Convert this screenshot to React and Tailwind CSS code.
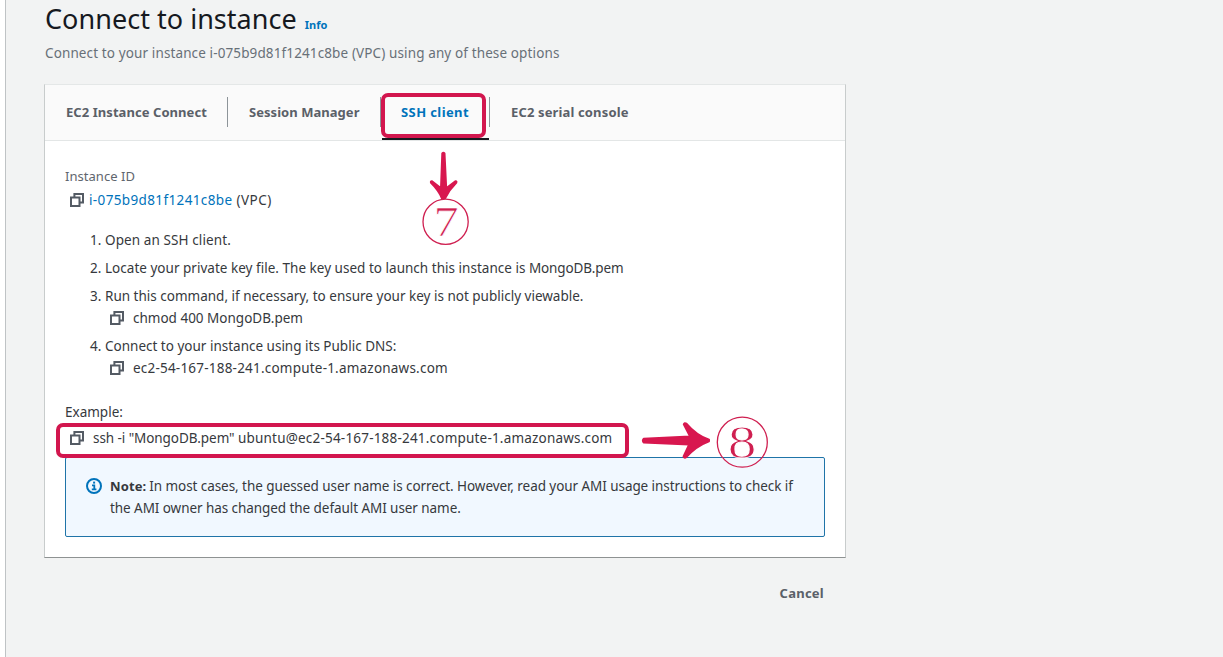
import React from "react";

function CopyIcon() {
  return (
    <svg width="14" height="14" viewBox="0 0 14 14" fill="none" stroke="#545b64" strokeWidth="2" className="shrink-0">
      <path d="M1 4.5h8.5V13H1z" />
      <path d="M4.4 4.2V1H13v8.6H9.9" />
    </svg>
  );
}

function InfoIcon() {
  return (
    <svg width="16" height="16" viewBox="0 0 16 16" fill="none" stroke="#0073bb" className="mt-[3px] shrink-0">
      <circle cx="8" cy="8" r="7" strokeWidth="2" />
      <path d="M6 7.3h2.3v4M5.8 11.4h4.6" strokeWidth="1.8" />
      <path d="M7.1 4.6h2" strokeWidth="2" />
    </svg>
  );
}

function Tab({ children, className }) {
  return <div className={"flex h-[30px] items-center pr-5 text-[13px] font-bold " + className}>{children}</div>;
}

function Marks() {
  return (
    <div className="pointer-events-none absolute inset-0">
      <div className="absolute top-[93px] left-[381px] h-[45px] w-[105px] rounded-[7px] border-4 border-[#d2164e]" />
      <div className="absolute top-[423px] left-[56px] h-[35px] w-[573px] rounded-[7px] border-4 border-[#d2164e]" />
      <div className="absolute top-[199px] left-[423px] w-[46px] scale-x-[1.2] text-center font-['Liberation_Serif',serif] text-[42px] leading-[46px] text-[#cf1f50] [-webkit-text-stroke:0.7px_white]">7</div>
      <div className="absolute top-[417px] left-[717px] w-[50px] scale-x-[1.22] text-center font-['Liberation_Serif',serif] text-[47px] leading-[50px] text-[#cf1f50] [-webkit-text-stroke:0.9px_white]">8</div>
      <svg className="absolute inset-0" width="1223" height="657" viewBox="0 0 1223 657">
        <g fill="#d8174f" stroke="#d8174f" strokeLinejoin="round" strokeWidth="2">
          <path d="M442.3 153.3Q443.4 152 444.5 153.3L446.2 188.4L455.4 181.2Q457 181 456.2 182.8Q449 190 445.2 198H441.8Q438.4 190 431 182.8Q430.4 181 432 181.2L441 188.4Z" />
          <path d="M643.6 438.8Q642.2 440.5 643.6 442.4L689.2 444.4L683.6 456.4Q684.2 458.4 686.2 457.2Q696 446 709 441.2V439.8Q696 435 686.4 423.6Q684.4 422.4 683.8 424.4L690 436.4Z" />
        </g>
        <g fill="none" stroke="#cf1f50" strokeWidth="1.3">
          <circle cx="445.6" cy="221.8" r="22.6" />
          <circle cx="742.3" cy="442.2" r="25" />
        </g>
      </svg>
    </div>
  );
}

export default function App() {
  return (
    <div className="relative flex h-[657px] w-[1223px] overflow-hidden bg-white font-['Noto_Sans',sans-serif] text-[13.5px] leading-[22px] text-[#36393d]">
      <main className="ml-[5px] flex-1 border-l border-[#bfc3c5] bg-[#f2f3f3] pl-[38px] whitespace-nowrap">
        <div className="flex h-[42px] items-baseline pt-px">
          <h1 className="pl-px text-[27px] leading-9 tracking-[0.03px] text-[#16191f]">Connect to instance</h1>
          <a className="ml-[8px] text-[11px] font-bold text-[#0073bb]">Info</a>
        </div>
        <p className="pl-px tracking-[0.12px] text-[#687078]">Connect to your instance i-075b9d81f1241c8be (VPC) using any of these options</p>

        <section className="mt-5 h-[474px] w-[802px] border border-t-[#e4e7e7] border-r-[#c8cccc] border-b-[#8e9292] border-l-[#c8cccc] bg-white">
          <div className="flex h-14 border-b border-[#e3e6e6] bg-[#fafafa] pt-3 text-[#5a6068]">
            <Tab className="w-[183px] border-r border-[#8d9499] pl-[21px] tracking-[0.06px]">EC2 Instance Connect</Tab>
            <Tab className="w-[153px] border-r border-[#8d9499] pl-[21px] tracking-[0.04px]">Session Manager</Tab>
            <div className="h-[44px] w-[109px]">
              <Tab className="border-r border-[#8d9499] pl-5 tracking-[0.4px] text-[#0073bb]">SSH client</Tab>
              <div className="mt-[11px] ml-px h-[2px] w-[107px] bg-[#16191f]" />
            </div>
            <Tab className="pl-[21px] tracking-[0.14px]">EC2 serial console</Tab>
          </div>

          <div className="px-5 pt-6">
            <div className="text-[13px] tracking-[0.04px] text-[#5f666e]">Instance ID</div>
            <div className="mt-[2px] flex items-center pl-[5px]">
              <CopyIcon />
              <span className="ml-[5px] tracking-[0.37px] text-[#0073bb]">i-075b9d81f1241c8be</span>
              <span className="ml-[4px] tracking-[0.5px]">(VPC)</span>
            </div>

            <ol className="mt-[18px] flex flex-col gap-[6px] pl-[25px]">
              <li className="flex"><span className="w-[15px]">1.</span><span className="tracking-[0.1px]">Open an SSH client.</span></li>
              <li className="flex"><span className="w-[15px]">2.</span><span><span className="tracking-[0.021px]">Locate your private key file. The key used to launch this instance is </span><span className="tracking-[-0.13px]">MongoDB.pem</span></span></li>
              <li className="flex">
                <span className="w-[15px]">3.</span>
                <div>
                  <div>Run this command, if necessary, to ensure your key is not publicly viewable.</div>
                  <div className="flex items-center gap-[9px] pl-[5px]"><CopyIcon /><span>chmod 400 MongoDB.pem</span></div>
                </div>
              </li>
              <li className="flex">
                <span className="w-[15px]">4.</span>
                <div>
                  <div>Connect to your instance using its Public DNS:</div>
                  <div className="flex items-center gap-[9px] pl-[5px]"><CopyIcon /><span className="tracking-[0.21px]">ec2-54-167-188-241.compute-1.amazonaws.com</span></div>
                </div>
              </li>
            </ol>

            <div className="mt-[22px]">Example:</div>
            <div className="mt-1 flex items-center gap-[9px] pl-[5px]">
              <CopyIcon />
              <span><span className="tracking-[-0.07px]">ssh -i "MongoDB.pem" </span><span className="tracking-[0.2px]">ubuntu@ec2-54-167-188-241.compute-1.amazonaws.com</span></span>
            </div>

            <div className="mt-2 flex h-20 gap-2 rounded-[2px] border border-[#1f74a8] bg-[#f1f8ff] pt-[17px] pl-5">
              <InfoIcon />
              <div className="tracking-[-0.065px]">
                <div><b className="mr-[3px] text-[13px] tracking-[0.1px]">Note:</b>In most cases, the guessed user name is correct. However, read your AMI usage instructions to check if</div>
                <div>the AMI owner has changed the default AMI user name.</div>
              </div>
            </div>
          </div>
        </section>

        <div className="mt-6 w-[780px] text-right text-[13px] font-bold tracking-[0.25px] text-[#5a6068]">Cancel</div>
      </main>
      <Marks />
    </div>
  );
}
